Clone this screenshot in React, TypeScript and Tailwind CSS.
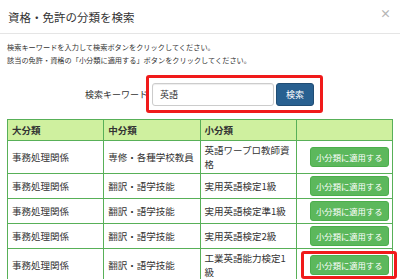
import React from 'react';

const rows = [
  { major: '事務処理関係', middle: '専修・各種学校教員', minor: ['英語ワープロ教師資格'], marked: false },
  { major: '事務処理関係', middle: '翻訳・語学技能', minor: ['実用英語検定1級'], marked: false },
  { major: '事務処理関係', middle: '翻訳・語学技能', minor: ['実用英語検定準1級'], marked: false },
  { major: '事務処理関係', middle: '翻訳・語学技能', minor: ['実用英語検定2級'], marked: false },
  { major: '事務処理関係', middle: '翻訳・語学技能', minor: ['工業英語能力検定1', '級'], marked: true },
];

export default function App() {
  return (
    <div
      className="w-[400px] h-[279px] overflow-hidden bg-white text-[#333]"
      style={{ fontFamily: '"Noto Sans CJK JP", "Noto Sans", sans-serif' }}
    >
      {/* Modal header */}
      <div className="flex items-center justify-between h-[34px] px-[8px] border-b border-[#e5e5e5]">
        <h4 className="text-[11.5px] leading-[16px] font-normal text-[#333]">資格・免許の分類を検索</h4>
        <span className="text-[11px] leading-none font-bold text-[#b5b5b5] mr-[1px] -mt-[6px]">×</span>
      </div>

      {/* Modal body */}
      <div className="px-[7px] pt-[7px]">
        <p className="text-[7.2px] leading-[13px]">
          検索キーワードを入力して検索ボタンをクリックしてください。
          <br />
          該当の免許・資格の「小分類に適用する」ボタンをクリックしてください。
        </p>

        {/* Search row */}
        <div className="flex items-center justify-center mt-[16px] pr-[1px]">
          <label className="text-[9px] leading-[12px] mr-[4px]">検索キーワード</label>
          <div className="relative flex items-center gap-[2px]">
            <div className="w-[122px] h-[23px] border border-[#ccc] rounded-[3px] flex items-center px-[7px] text-[9px] shadow-[inset_0_1px_1px_rgba(0,0,0,0.075)]">
              英語
            </div>
            <button className="w-[38px] h-[23px] rounded-[3px] bg-[#286090] border border-[#204d74] text-white text-[9px]">
              検索
            </button>
            <div className="absolute -left-[6px] -right-[9px] -top-[8px] -bottom-[7px] border-[3px] border-[#f01a1a] rounded-[3px] pointer-events-none" />
          </div>
        </div>

        {/* Result table */}
        <table className="mt-[13px] w-[386px] table-fixed border-collapse text-[9.5px] leading-[14px]">
          <thead>
            <tr className="bg-[#cff09f]">
              <th className="border border-[#58b058] px-[4px] py-[3px] text-left font-bold">大分類</th>
              <th className="border border-[#58b058] px-[4px] py-[3px] text-left font-bold">中分類</th>
              <th className="border border-[#58b058] px-[4px] py-[3px] text-left font-bold">小分類</th>
              <th className="border border-[#58b058] px-[4px] py-[3px]"></th>
            </tr>
          </thead>
          <tbody>
            {rows.map((r, i) => (
              <tr key={i}>
                <td className="border border-[#58b058] px-[4px] py-[2px] align-middle">{r.major}</td>
                <td className="border border-[#58b058] px-[4px] py-[2px] align-middle">{r.middle}</td>
                <td className="border border-[#58b058] pl-[4px] pr-[6px] py-[2px] align-middle">
                  {r.minor.map((line, j) => (
                    <span key={j} className="block">{line}</span>
                  ))}
                </td>
                <td className="border border-[#58b058] pl-[13px] pr-[4px] py-[2px] align-middle">
                  <div className="relative flex w-[79px]">
                    <button className="w-[79px] h-[20px] rounded-[3px] bg-[#5cb85c] border border-[#4cae4c] text-white text-[8.3px] leading-none">
                      小分類に適用する
                    </button>
                    {r.marked && (
                      <div className="absolute -left-[9px] -right-[8px] -top-[4px] -bottom-[4px] border-[3px] border-[#f01a1a] rounded-[3px] pointer-events-none" />
                    )}
                  </div>
                </td>
              </tr>
            ))}
          </tbody>
        </table>
      </div>
    </div>
  );
}
